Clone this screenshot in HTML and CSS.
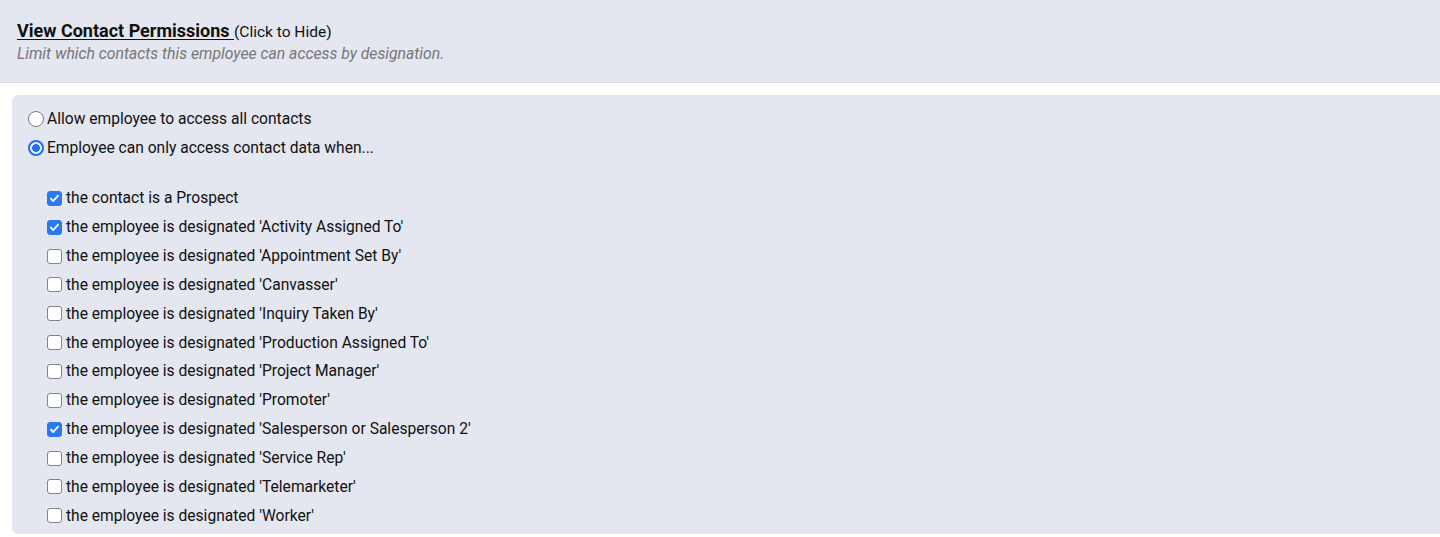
FILE: index.html
```html
<!DOCTYPE html>
<html>
<head>
<meta charset="utf-8">
<link rel="stylesheet" href="styles.css">
</head>
<body>
<div class="header">
  <div class="title-line"><a class="title">View Contact Permissions </a><span class="hint">(Click to Hide)</span></div>
  <div class="subtitle">Limit which contacts this employee can access by designation.</div>
</div>
<div class="panel">
  <label class="option"><input type="radio" name="access"> Allow employee to access all contacts</label>
  <label class="option"><input type="radio" name="access" checked> Employee can only access contact data when...</label>
  <div class="checklist">
    <label class="check"><input type="checkbox" checked> the contact is a Prospect</label>
    <label class="check"><input type="checkbox" checked> the employee is designated 'Activity Assigned To'</label>
    <label class="check"><input type="checkbox"> the employee is designated 'Appointment Set By'</label>
    <label class="check"><input type="checkbox"> the employee is designated 'Canvasser'</label>
    <label class="check"><input type="checkbox"> the employee is designated 'Inquiry Taken By'</label>
    <label class="check"><input type="checkbox"> the employee is designated 'Production Assigned To'</label>
    <label class="check"><input type="checkbox"> the employee is designated 'Project Manager'</label>
    <label class="check"><input type="checkbox"> the employee is designated 'Promoter'</label>
    <label class="check"><input type="checkbox" checked> the employee is designated 'Salesperson or Salesperson 2'</label>
    <label class="check"><input type="checkbox"> the employee is designated 'Service Rep'</label>
    <label class="check"><input type="checkbox"> the employee is designated 'Telemarketer'</label>
    <label class="check"><input type="checkbox"> the employee is designated 'Worker'</label>
  </div>
</div>
</body>
</html>
```
FILE: styles.css
```css
html, body {
  margin: 0;
  padding: 0;
  background: #ffffff;
  font-family: Roboto, "Liberation Sans", Arial, sans-serif;
  color: #111;
}
.header {
  background: #e4e6f0;
  border-bottom: 1px solid #d6d7dc;
  height: 83px;
  box-sizing: border-box;
  padding: 21px 17px 0;
}
.title-line {
  height: 20px;
  line-height: 20px;
  white-space: nowrap;
}
.title {
  font-size: 18px;
  font-weight: 700;
  color: #111;
  text-decoration: underline;
  text-underline-offset: 2px;
  white-space: pre;
}
.hint {
  font-size: 15.5px;
  color: #111;
}
.subtitle {
  margin-top: 3px;
  font-size: 15.75px;
  line-height: 20px;
  font-style: italic;
  color: #777;
}
.panel {
  margin: 12px 0 0 12px;
  background: #e4e6f0;
  border-radius: 6px 0 0 6px;
  height: 439px;
  box-sizing: border-box;
  padding: 9px 0 0 16px;
  font-size: 15.6px;
}
.option {
  display: flex;
  align-items: center;
  height: 29px;
}
.option input {
  appearance: none;
  -webkit-appearance: none;
  box-sizing: border-box;
  width: 16px;
  height: 16px;
  margin: 0 3px 0 0;
  border: 1px solid #7b7b7b;
  border-radius: 50%;
  background: #fff;
  flex: none;
}
.option input:checked {
  border: 2px solid #1f6ff0;
  background: radial-gradient(circle, #1f6ff0 0 3.6px, #e8efff 4.2px);
}
.checklist {
  margin-top: 22px;
  padding-left: 19px;
  display: flex;
  flex-direction: column;
}
.check {
  display: flex;
  align-items: center;
  height: 28.85px;
}
.check input {
  appearance: none;
  -webkit-appearance: none;
  box-sizing: border-box;
  width: 15px;
  height: 15px;
  margin: 0 4px 0 0;
  border: 1px solid #858585;
  border-radius: 3px;
  background: #fff;
  flex: none;
}
.check input:checked {
  border-color: #2b78f3;
  background-color: #2b78f3;
  background-image: url("data:image/svg+xml,%3Csvg xmlns='http://www.w3.org/2000/svg' viewBox='0 0 15 15'%3E%3Cpath d='M3.4 7.6 L6.1 10.4 L11.6 4.2' fill='none' stroke='white' stroke-width='2.1' stroke-linecap='round' stroke-linejoin='round'/%3E%3C/svg%3E");
  background-size: 100% 100%;
}
```
